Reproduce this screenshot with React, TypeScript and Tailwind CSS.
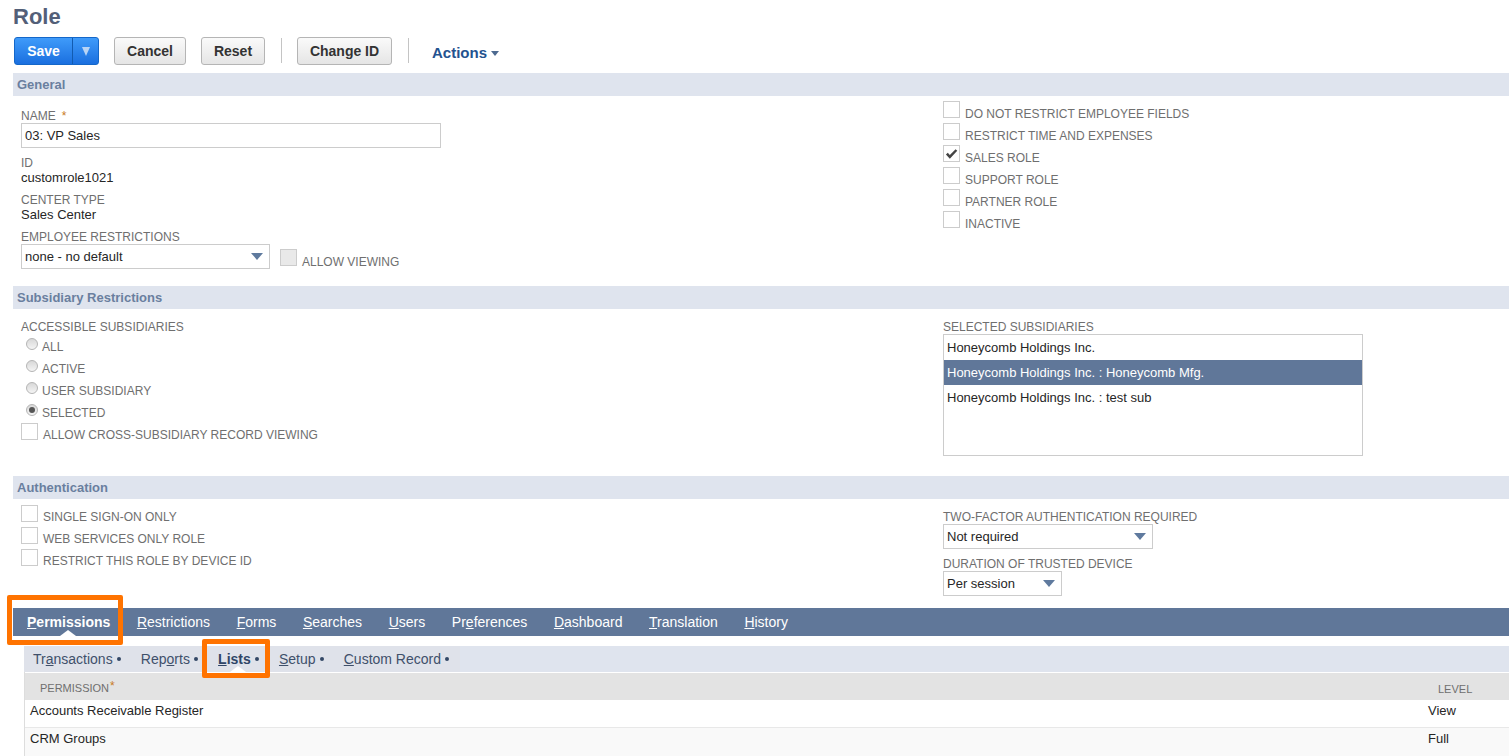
import React from "react";

const Label = ({ children, className = "" }: { children: React.ReactNode; className?: string }) => (
  <div className={`text-[12px] leading-[14px] text-[#6f6f6f] ${className}`}>{children}</div>
);

const Value = ({ children }: { children: React.ReactNode }) => (
  <div className="text-[13px] leading-[15px] text-[#262626]">{children}</div>
);

const Box = ({ checked = false, disabled = false }: { checked?: boolean; disabled?: boolean }) => (
  <span className={`relative flex h-[17px] w-[17px] shrink-0 items-center justify-center border border-[#cccccc] ${disabled ? "bg-[#e9e9e9]" : "bg-white"}`}>
    {checked && (
      <svg viewBox="0 0 14 12" className="h-[12px] w-[13px]">
        <path d="M1 6.5 L3 4.6 L5.2 7 L11.4 0.8 L13.2 2.6 L5.2 11 Z" fill="#444444" />
      </svg>
    )}
  </span>
);

const Check = ({ label, checked = false, textTop = "mt-[5px]" }: { label: string; checked?: boolean; textTop?: string }) => (
  <div className="flex h-[22px] items-start">
    <Box checked={checked} />
    <span className={`ml-[5px] text-[12px] leading-[14px] text-[#6f6f6f] ${textTop}`}>{label}</span>
  </div>
);

const Radio = ({ label, checked = false }: { label: string; checked?: boolean }) => (
  <div className="flex h-[22px] items-start pl-[5px]">
    <span className="mt-[1px] flex h-[12px] w-[12px] items-center justify-center rounded-full border border-[#b5b5b5] bg-gradient-to-b from-[#d8d8d8] to-[#f4f4f4]">
      {checked && <span className="h-[6px] w-[6px] rounded-full bg-[#555555]" />}
    </span>
    <span className="ml-[4px] mt-[3px] text-[12px] leading-[14px] text-[#6f6f6f]">{label}</span>
  </div>
);

const Select = ({ value, className }: { value: string; className: string }) => (
  <div className={`flex h-[25px] items-center justify-between border border-[#cccccc] bg-white pl-[3px] pr-[6px] text-[13px] text-[#262626] ${className}`}>
    <span>{value}</span>
    <svg viewBox="0 0 12 7" className="h-[7px] w-[12px]">
      <path d="M0 0 H12 L6 7 Z" fill="#5f7a9e" />
    </svg>
  </div>
);

const Section = ({ title }: { title: string }) => (
  <div className="ml-[13px] flex h-[23px] items-center bg-[#dfe4ee] pl-[4px] text-[13px] font-bold text-[#6a7f9f]">{title}</div>
);

const GrayButton = ({ children, className = "" }: { children: React.ReactNode; className?: string }) => (
  <button className={`h-[28px] rounded-[3px] border border-[#b5b5b5] bg-gradient-to-b from-[#fafafa] to-[#e5e5e5] text-[14px] font-bold text-[#333333] ${className}`}>
    {children}
  </button>
);

const Notch = ({ className }: { className: string }) => (
  <svg viewBox="0 0 16 6" className={`absolute h-[6px] w-[16px] ${className}`}>
    <path d="M0 6 L8 0 L16 6 Z" fill="#ffffff" />
  </svg>
);

const Tab = ({ pre = "", u, post, active = false }: { pre?: string; u: string; post: string; active?: boolean }) => (
  <span className={`relative h-[28px] text-[14px] leading-[28px] text-white ${active ? "font-bold" : ""}`}>
    {pre}
    <span className="underline">{u}</span>
    {post}
    {active && <Notch className="bottom-0 left-[33px]" />}
  </span>
);

const SubTab = ({ pre = "", u, post, active = false }: { pre?: string; u: string; post: string; active?: boolean }) => (
  <span className={`relative flex h-[26px] items-center text-[14px] ${active ? "font-bold text-[#2f4567]" : "text-[#40506a]"}`}>
    <span>
      {pre}
      <span className="underline">{u}</span>
      {post}
    </span>
    <span className="ml-[4px] h-[4px] w-[4px] rounded-full bg-[#334766]" />
    {active && <Notch className="bottom-0 left-[12px]" />}
  </span>
);

export default function App() {
  return (
    <div className="relative h-[756px] w-[1509px] overflow-hidden bg-white font-['Liberation_Sans',Arial,sans-serif]">
      <div className="h-[37px] pl-[13px] pt-[4px] text-[22px] font-bold leading-[25px] text-[#535f78]">Role</div>

      <div className="flex h-[36px] items-start pl-[14px]">
        <div className="flex h-[28px] w-[85px] overflow-hidden rounded-[3px] border border-[#1467c9] bg-gradient-to-b from-[#3f9bfa] to-[#1a6fdf] text-white">
          <span className="flex w-[58px] items-center justify-center border-r border-[#125bb0] text-[14px] font-bold">Save</span>
          <span className="flex flex-1 items-center justify-center">
            <svg viewBox="0 0 8 9" className="h-[9px] w-[8px]">
              <path d="M0 0 H8 L4 9 Z" fill="#b8d4f5" />
            </svg>
          </span>
        </div>
        <GrayButton className="ml-[15px] w-[72px]">Cancel</GrayButton>
        <GrayButton className="ml-[15px] w-[64px]">Reset</GrayButton>
        <span className="ml-[16px] mt-[1px] h-[25px] w-px bg-[#c4c4c4]" />
        <GrayButton className="ml-[15px] w-[95px]">Change ID</GrayButton>
        <span className="ml-[16px] mt-[1px] h-[25px] w-px bg-[#c4c4c4]" />
        <span className="ml-[23px] mt-[7px] flex items-center text-[15px] font-bold leading-[17px] text-[#24528f]">
          Actions
          <svg viewBox="0 0 8 5" className="ml-[4px] mt-[1px] h-[5px] w-[8px]">
            <path d="M0 0 H8 L4 5 Z" fill="#4d6a90" />
          </svg>
        </span>
      </div>

      <Section title="General" />
      <div className="flex h-[190px] pl-[21px]">
        <div className="w-[922px]">
          <div className="mt-[13px] flex items-center">
            <Label>NAME</Label>
            <span className="ml-[6px] text-[12px] leading-[14px] text-[#c97a1e]">*</span>
          </div>
          <div className="flex h-[25px] w-[420px] items-center border border-[#cccccc] pl-[3px] text-[13px] text-[#262626]">03: VP Sales</div>
          <Label className="mt-[8px]">ID</Label>
          <Value>customrole1021</Value>
          <Label className="mt-[8px]">CENTER TYPE</Label>
          <Value>Sales Center</Value>
          <Label className="mt-[8px]">EMPLOYEE RESTRICTIONS</Label>
          <div className="flex items-start">
            <Select value="none - no default" className="w-[249px]" />
            <span className="ml-[10px] mt-[5px]"><Box disabled /></span>
            <Label className="ml-[5px] mt-[11px]">ALLOW VIEWING</Label>
          </div>
        </div>
        <div className="pt-[5px]">
          <Check textTop="mt-[6px]" label="DO NOT RESTRICT EMPLOYEE FIELDS" />
          <Check textTop="mt-[6px]" label="RESTRICT TIME AND EXPENSES" />
          <Check textTop="mt-[6px]" label="SALES ROLE" checked />
          <Check textTop="mt-[6px]" label="SUPPORT ROLE" />
          <Check textTop="mt-[6px]" label="PARTNER ROLE" />
          <Check textTop="mt-[6px]" label="INACTIVE" />
        </div>
      </div>

      <Section title="Subsidiary Restrictions" />
      <div className="flex h-[167px] pl-[21px]">
        <div className="w-[922px] pt-[11px]">
          <Label>ACCESSIBLE SUBSIDIARIES</Label>
          <div className="mb-[-2px] mt-[3px]">
            <Radio label="ALL" />
            <Radio label="ACTIVE" />
            <Radio label="USER SUBSIDIARY" />
            <Radio label="SELECTED" checked />
          </div>
          <Check label="ALLOW CROSS-SUBSIDIARY RECORD VIEWING" />
        </div>
        <div className="pt-[11px]">
          <Label>SELECTED SUBSIDIARIES</Label>
          <div className="h-[122px] w-[420px] border border-[#cccccc] text-[13px] text-[#262626]">
            <div className="flex h-[25px] items-center pl-[3px]">Honeycomb Holdings Inc.</div>
            <div className="flex h-[25px] items-center bg-[#607799] pl-[3px] text-white">Honeycomb Holdings Inc. : Honeycomb Mfg.</div>
            <div className="flex h-[25px] items-center pl-[3px]">Honeycomb Holdings Inc. : test sub</div>
          </div>
        </div>
      </div>

      <Section title="Authentication" />
      <div className="flex h-[109px] pl-[21px]">
        <div className="w-[922px] pt-[6px]">
          <Check label="SINGLE SIGN-ON ONLY" />
          <Check label="WEB SERVICES ONLY ROLE" />
          <Check label="RESTRICT THIS ROLE BY DEVICE ID" />
        </div>
        <div className="pt-[11px]">
          <Label>TWO-FACTOR AUTHENTICATION REQUIRED</Label>
          <Select value="Not required" className="w-[210px]" />
          <Label className="mt-[8px]">DURATION OF TRUSTED DEVICE</Label>
          <Select value="Per session" className="w-[119px]" />
        </div>
      </div>

      <div className="ml-[13px] flex h-[28px] items-center gap-[26.6px] bg-[#607799] pl-[14px]">
        <Tab u="P" post="ermissions" active />
        <Tab u="R" post="estrictions" />
        <Tab u="F" post="orms" />
        <Tab u="S" post="earches" />
        <Tab u="U" post="sers" />
        <Tab pre="Pr" u="e" post="ferences" />
        <Tab u="D" post="ashboard" />
        <Tab u="T" post="ranslation" />
        <Tab u="H" post="istory" />
      </div>

      <div className="ml-[24px] mt-[10px]">
        <div className="flex h-[26px] items-center bg-[#dfe4ee]">
          <div className="flex h-full w-[436px] items-center gap-[20.2px] bg-[#dfe2ea] pl-[9px]">
            <SubTab pre="Tr" u="a" post="nsactions" />
            <SubTab pre="Rep" u="o" post="rts" />
            <SubTab u="L" post="ists" active />
            <SubTab u="S" post="etup" />
            <SubTab u="C" post="ustom Record" />
          </div>
        </div>
        <div className="border-l border-[#dddddd]">
          <div className="relative flex h-[28px] items-center border-t border-white bg-[#e3e3e3] pl-[15px] pt-[3px] text-[11px] text-[#6f6f6f]">
            PERMISSION<span className="mb-[4px] ml-[1px] text-[12px] text-[#c97a1e]">*</span>
            <span className="absolute left-[1413px] top-[8px]">LEVEL</span>
          </div>
          <div className="flex h-[28px] items-start justify-between border-b border-[#e8e8e8] pl-[5px] pt-[1px] text-[13px] text-[#262626]">
            <span>Accounts Receivable Register</span>
            <span className="w-[81px]">View</span>
          </div>
          <div className="flex h-[28px] items-start justify-between bg-[#f9f9f9] pl-[5px] pt-[1px] text-[13px] text-[#262626]">
            <span>CRM Groups</span>
            <span className="w-[81px]">Full</span>
          </div>
        </div>
      </div>

      <div className="pointer-events-none absolute left-[7px] top-[595px] h-[50px] w-[116px] rounded-[2px] border-[5px] border-[#ff7300]" />
      <div className="pointer-events-none absolute left-[202px] top-[639px] h-[39px] w-[68px] rounded-[2px] border-[5px] border-[#ff7300]" />
    </div>
  );
}
